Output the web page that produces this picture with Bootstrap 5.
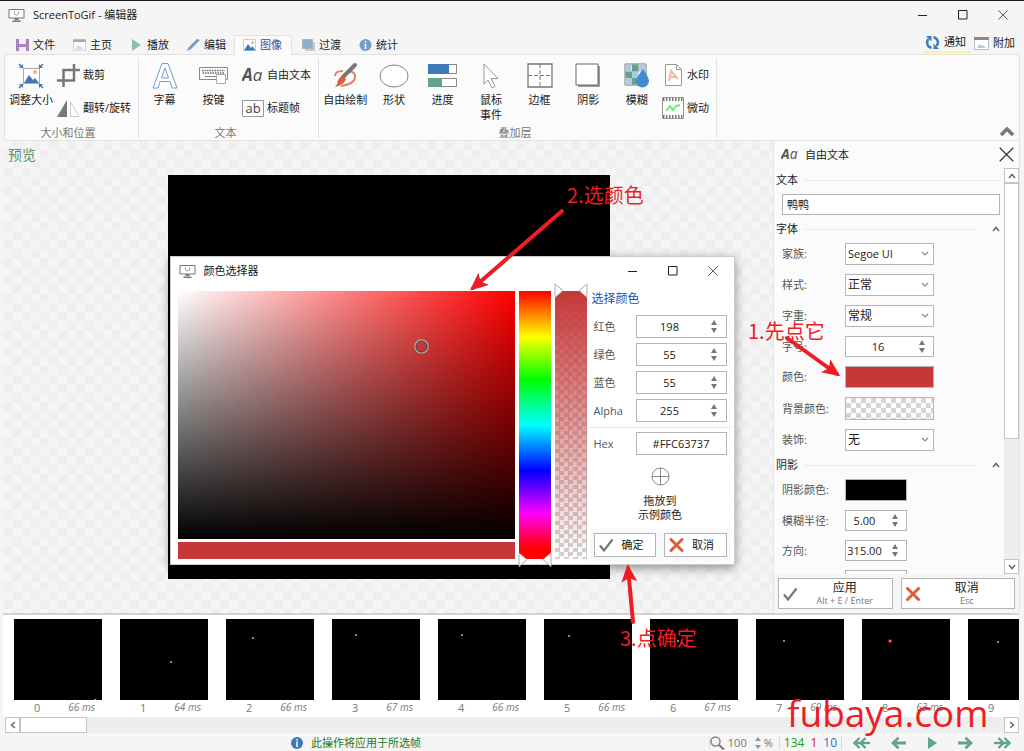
<!DOCTYPE html>
<html lang="zh-CN">
<head>
<meta charset="utf-8">
<meta name="viewport" content="width=device-width, initial-scale=1">
<title>ScreenToGif - 编辑器</title>
<link href="https://cdn.jsdelivr.net/npm/bootstrap@5.3.0/dist/css/bootstrap.min.css" rel="stylesheet">
<style>
  :root { --edge:#b4b4b4; --ink:#222; }
  body { height:100vh; overflow:hidden; background:#f5f5f5; color:var(--ink);
         font:11px/14px "Open Sans","Noto Sans CJK SC",sans-serif; border-top:1px solid #201a20; }
  svg { display:block; flex:none; }
  .btn { --bs-btn-font-size:11px; --bs-btn-line-height:14px; --bs-btn-padding-x:0; --bs-btn-padding-y:0;
         --bs-btn-border-radius:0; --bs-btn-border-width:0; --bs-btn-color:var(--ink); }
  .caption-row { height:32px; padding-bottom:4px; }
  .win-controls { gap:30px; }
  .win-controls .btn { width:10px; }

  /* ribbon */
  .tab-row { height:21px; padding:0 9px 0 6px; }
  .tab-row .nav-link { width:57px; height:19px; margin-top:2px; padding:0 0 0 9px; gap:4px; color:var(--ink); border:1px solid transparent; }
  .tab-row .nav-link.active { background:#fbfbfb; border-color:#e2e2e2 #e2e2e2 #fbfbfb; color:#2350ad; width:58px; height:20px; padding-left:8px; }
  .tab-row .extra { height:20px; gap:4px; }
  .tab-row .noted { border-bottom:2px solid #fbf3a0; padding:0 4px 0 2px; }
  .ribbon { height:87px; background:#fbfbfb; border:1px solid #e2e2e2; }
  .r-group { padding:4px 7px 0 1px; border-right:1px solid #e2e2e6; height:80px; margin-top:3px; }
  .r-group.first { padding-left:0; }
  .r-group.last { padding-left:2px; }
  .r-tools { height:65px; }
  .big-tool { width:49px; display:flex; flex-direction:column; align-items:center; gap:2px; line-height:15px; white-space:nowrap; }
  .first .big-tool { width:52px; }
  .big-tool svg { height:28px; }
  .side-tools { gap:9px; padding-top:1px; }
  .last .side-tools { margin-left:1px; }
  .side-tools .btn { display:flex; align-items:center; gap:3px; height:24px; white-space:nowrap; }
  .seven { display:grid; grid-template-columns:repeat(7,1fr); width:340px; }
  .seven .big-tool { width:auto; }
  .r-label { color:#777; text-align:center; line-height:12px; }

  /* canvas and image */
  .stage { background:repeating-conic-gradient(#efefef 0 25%,#f5f5f5 0 50%) 0 0/18px 18px; }
  .stage-title { left:4px; top:7px; font-size:14px; color:#5a9470; }
  .shot { width:442px; height:404px; background:#000; }

  /* colour dialog */
  .picker { left:2px; top:81px; width:565px; height:309px; background:#fff; border:1px solid #ccc; box-shadow:0 3px 10px rgba(0,0,0,.42); }
  .picker-head { height:28px; padding:0 16px 0 8px; }
  .picker-body { height:274px; padding:0 3px 0 7px; margin-top:6px; gap:4px; }
  .sv { height:248px; background:linear-gradient(to top,#000,transparent),linear-gradient(to right,#fff,#f00); }
  .sv svg { left:236px; top:48px; }
  .picked { height:17px; background:#c63737; margin-top:3px; }
  .slide { width:32px; height:268px; }
  .slide input { appearance:none; -webkit-appearance:none; width:100%; height:100%; margin:0; display:block; background:transparent; }
  .slide input::-webkit-slider-thumb { -webkit-appearance:none; width:0; height:0; }
  .hue { background:linear-gradient(#f00,#ff0 17%,#0f0 33%,#0ff 50%,#00f 67%,#f0f 83%,#f00 96%); }
  .alpha { background:linear-gradient(#c63737,rgba(198,55,55,0)),repeating-conic-gradient(#d2d2d2 0 25%,#fff 0 50%) 0 0/9px 9px; }
  .slide svg { left:-1px; overflow:visible; }
  .alpha svg { top:-8px; } .hue svg { bottom:-8px; }
  .values { width:141px; margin-left:-1px; }
  .values h2 { font-size:12px; line-height:16px; color:#2350ad; margin:0 0 8px 2px; }
  .v-row { display:flex; align-items:center; justify-content:space-between; padding:0 4px; margin-bottom:5px; color:#555; }

  /* fields */
  .box { display:flex; background:#fff; border:1px solid var(--edge); height:21px; }
  .box input { border:0; border-radius:0; padding:0; text-align:center; font-size:11px; line-height:14px; min-width:0; min-height:0; color:var(--ink); flex:1; background:transparent; }
  .box .spin { width:23px; display:flex; flex-direction:column; justify-content:space-evenly; align-items:center; }
  .box .spin .btn { line-height:0; }
  .v-row .box { width:91px; height:23px; }
  .w-wide { width:89px; } .w-slim { width:62px; }
  .form-select { height:22px; min-height:0; padding:0 16px 0 2px; border-radius:0; border-color:var(--edge); font-size:12px; line-height:18px; color:var(--ink);
    background:#fff url("data:image/svg+xml,%3Csvg xmlns='http://www.w3.org/2000/svg' viewBox='0 0 8 8'%3E%3Cpath d='M1 2l3 3 3-3' fill='none' stroke='%23888' stroke-width='1.2'/%3E%3C/svg%3E") no-repeat right 4px center/8px 8px; }
  .form-select.latin { font-size:11px; }
  .cmd { display:flex; align-items:center; background:#fff; --bs-btn-border-width:1px; --bs-btn-border-color:var(--edge); }

  /* side panel */
  .side { width:247px; background:#fbfbfb; border-left:1px solid #e4e4e4; border-right:1px solid #e4e4e4; }
  .side-head { height:27px; padding:0 5px 0 7px; gap:6px; }
  .legend-row { height:18px; margin:5px 4px 5px 2px; gap:6px; }
  .legend-row.top { margin-top:3px; }
  .legend-row hr { flex:1; margin:0; border-color:#bbb; }
  .p-row { display:flex; align-items:center; margin:0 0 9px 8px; color:#555; }
  .p-row label { width:63px; }
  .swatch { height:22px; --bs-btn-border-width:1px; --bs-btn-border-color:var(--edge); }
  .red-fill { background:#c63737; } .black-fill { background:#000; }
  .no-fill { height:23px; background:repeating-conic-gradient(#d6d6d6 0 25%,#fff 0 50%) 0 0/10px 10px; }
  .bar-y { width:15px; background:#eee; }
  .bar-y .btn, .bar-x .btn { background:#fff; border:1px solid #c4c4c4; width:15px; height:15px; display:flex; align-items:center; justify-content:center; }
  .bar-y .grip { height:256px; background:#fff; border:1px solid #c4c4c4; }
  .side-foot { height:39px; padding:4px; gap:8px; background:#f5f5f5; }
  .side-foot .cmd { flex:1; padding:0 0 0 4px; }
  .side-foot b { display:block; font-weight:400; font-size:12px; line-height:15px; }
  .side-foot small { display:block; font-size:9px; line-height:12px; color:#777; }

  /* frame strip */
  .strip { height:104px; background:#fff; border-top:2px solid #d2d2d2; padding:4px 0 0 11px; margin:0 5px 0 3px; }
  .frame { width:88px; margin-right:18px; flex:none; color:#777; }
  .frame svg { background:#000; width:88px; height:81px; }
  .frame div { padding:1px 7px 0 20px; line-height:13px; }
  .frame i { font-size:10px; }
  .bar-x { height:16px; background:#eee; margin:0 5px 2px; }
  .bar-x .btn { height:16px; }
  .bar-x .grip { width:67px; background:#fff; border:1px solid #c4c4c4; }
  .status { height:16px; padding:0 12px 0 3px; }
  .hint { color:#1a7a1a; }
  .counts { font-size:12px; gap:6px; padding:0 4px; border:solid #ddd; border-width:0 1px; }
  .zoom { gap:3px; width:70px; color:#777; border-left:1px solid #ddd; }
  .zoom input { width:24px; border:0; padding:0; background:transparent; color:#777; font-size:11px; line-height:14px; }
  .play { gap:16px; width:170px; padding-left:10px; }

  /* red notes over the window */
  .notes { inset:0; pointer-events:none; z-index:9; color:#ee1c24; }
  .notes p { position:absolute; margin:0; font:20px/24px "Noto Sans CJK SC",sans-serif; white-space:nowrap; }
  .n1 { left:748px; top:318px; } .n2 { left:567px; top:182px; } .n3 { left:620px; top:625px; }
  .notes .site { left:787px; top:687px; font:37px/50px "Open Sans",sans-serif; }
</style>
</head>
<body class="d-flex flex-column position-relative">

<svg width="0" height="0" class="position-absolute" aria-hidden="true">
  <defs>
    <symbol id="app" viewBox="0 0 16 13"><path d="M.5.5h15v8.500h-15z" fill="#fff" stroke="#777"/><path d="M6 2.500v2.500q2 2 4 0V2.500" fill="none" stroke="#999"/><path d="M6 9h4v2H6zM4 11.500h8V13H4z" fill="#777"/></symbol>
    <symbol id="aa" viewBox="0 0 22 16"><text x="0" y="14" font-family="Open Sans" font-style="italic" font-size="17" fill="#555"><tspan font-weight="700">A</tspan>a</text></symbol>
    <symbol id="pic" viewBox="0 0 13 12"><path d="M.5.5h12v11H.5z" fill="#fff" stroke="#ccc"/><path d="M1 11.500 5 5l3 4 1.500-2 3 4.500z" fill="#3c7ab8"/><circle cx="9.500" cy="3.500" r="1.500" fill="#f0b95b"/></symbol>
    <symbol id="win" viewBox="0 0 15 13"><path d="M.5.5h14v12H.5z" fill="#fff" stroke="#bbb"/><path d="M0 0h15v3H0z" fill="#888"/><path d="M3 11l3-4 2 2 1-1 3 3z" fill="#a8cbea"/></symbol>
    <symbol id="info" viewBox="0 0 12 12"><circle cx="6" cy="6" r="6" fill="#3c7ab8"/><path d="M6 2v1.500M6 4.500V10" stroke="#fff" stroke-width="1.500"/></symbol>
    <symbol id="up" viewBox="0 0 6 5"><path d="M3 0l3 5H0z" fill="#777"/></symbol>
    <symbol id="down" viewBox="0 0 6 5"><path d="M3 5l3-5H0z" fill="#777"/></symbol>
    <symbol id="tick" viewBox="0 0 15 14"><path d="M1 7.500l4 5L13.500 1.500" fill="none" stroke="#777" stroke-width="2.200"/></symbol>
    <symbol id="cross" viewBox="0 0 14 14"><path d="M1.500 1.500l11 11M12.500 1.500l-11 11" stroke="#dc5c3c" stroke-width="3" stroke-linecap="round"/></symbol>
    <symbol id="min" viewBox="0 0 10 10"><path d="M0 5.500h9" stroke="#222"/></symbol>
    <symbol id="max" viewBox="0 0 10 10"><path d="M.5.5h8.500V9H.5z" fill="none" stroke="#222"/></symbol>
    <symbol id="x" viewBox="0 0 10 10"><path d="M.5.5l9 9M9.500.5l-9 9" stroke="#333" stroke-width=".8"/></symbol>
    <symbol id="chev" viewBox="0 0 8 6"><path d="M1 5l3-3.500L7 5" fill="none" stroke="#666" stroke-width="1.500"/></symbol>
    <symbol id="arrow" viewBox="0 0 15 12"><path d="M0 6h12" stroke="#63a28f" stroke-width="3"/><path d="M7.500.8l5.500 5.200-5.500 5.200" fill="none" stroke="#63a28f" stroke-width="2.800"/></symbol>
    <symbol id="arrow2" viewBox="0 0 18 12"><path d="M0 6h14" stroke="#63a28f" stroke-width="2.400"/><path d="M4.500 1l5 5-5 5M10.500 1l5 5-5 5" fill="none" stroke="#63a28f" stroke-width="2.400"/></symbol>
    <symbol id="pointers" viewBox="0 0 34 15"><path d="M1 1v13.500l8-7zM33 1v13.500l-8-7z" fill="#fff" stroke="#aaa"/></symbol>
  </defs>
</svg>

<header class="caption-row d-flex flex-shrink-0 align-items-center justify-content-between ps-2 pe-3">
  <div class="d-flex align-items-center gap-2"><svg width="17" height="13"><use href="#app"/></svg><span>ScreenToGif - 编辑器</span></div>
  <div class="win-controls d-flex">
    <button class="btn" aria-label="最小化"><svg width="10" height="10"><use href="#min"/></svg></button>
    <button class="btn" aria-label="最大化"><svg width="10" height="10"><use href="#max"/></svg></button>
    <button class="btn" aria-label="关闭"><svg width="10" height="10"><use href="#x"/></svg></button>
  </div>
</header>

<div class="tab-row d-flex flex-shrink-0 justify-content-between position-relative z-1">
  <nav class="nav flex-nowrap">
    <a href="#" class="nav-link d-flex align-items-center"><svg width="13" height="12"><path d="M0 0h13v12H0z" fill="#a583bd"/><path d="M3 0h7v5H3zM3 8h7v4H3z" fill="#f3edf7"/></svg>文件</a>
    <a href="#" class="nav-link d-flex align-items-center"><svg width="13" height="12" opacity=".7"><use href="#win"/></svg>主页</a>
    <a href="#" class="nav-link d-flex align-items-center"><svg width="13" height="12"><path d="M2 0l9 6-9 6z" fill="#8fbdb0"/></svg>播放</a>
    <a href="#" class="nav-link d-flex align-items-center"><svg width="13" height="12"><path d="M0 12l1-3L10 0l3 1-9 9z" fill="#6c9ccc"/></svg>编辑</a>
    <a href="#" class="nav-link active d-flex align-items-center" aria-current="page"><svg width="13" height="12"><use href="#pic"/></svg>图像</a>
    <a href="#" class="nav-link d-flex align-items-center"><svg width="13" height="12"><path d="M3 3h10v9H3z" fill="#c6cdd2"/><path d="M.5.5h10v9H.5z" fill="#8db0cf" stroke="#b3b3b3"/></svg>过渡</a>
    <a href="#" class="nav-link d-flex align-items-center"><svg width="13" height="12" opacity=".7"><use href="#info"/></svg>统计</a>
  </nav>
  <div class="d-flex">
    <button class="btn extra noted d-flex align-items-center"><svg width="15" height="15" viewBox="0 0 15 15"><path d="M6.500 12.800A5.300 5.300 0 0 1 3.500 4M8.500 2.200A5.300 5.300 0 0 1 11.500 11" fill="none" stroke="#3c7ab8" stroke-width="2.400"/><path d="M1 1h5.500v5.500zM14 14H8.500V8.500z" fill="#3c7ab8"/></svg>通知</button>
    <button class="btn extra d-flex align-items-center ps-1"><svg width="15" height="13"><use href="#win"/></svg>附加</button>
  </div>
</div>

<section class="ribbon d-flex flex-shrink-0 ms-1 me-1">
  <div class="r-group first">
    <div class="r-tools d-flex">
      <button class="btn big-tool"><svg width="28" height="28" viewBox="0 0 28 28"><path d="M6.500 6.500h16v15h-16z" fill="#fff" stroke="#aaa"/><path d="M7 21l5-8 4 5 2-2 4 5z" fill="#3c7ab8"/><circle cx="18" cy="10" r="2" fill="#f0b95b"/><path d="M2 2l4 4M26 2l-4 4M2 26l4-4M26 26l-4-4" stroke="#3c7ab8" stroke-width="1.500"/><path d="M6 2v4H2zM22 2v4h4zM6 26v-4H2zM22 26v-4h4z" fill="#3c7ab8"/></svg>调整大小</button>
      <div class="side-tools d-flex flex-column">
        <button class="btn"><svg width="23" height="23"><path d="M6.500 0v17H23M0 6.500h17V23" fill="none" stroke="#777" stroke-width="2.500" transform="matrix(1 0 0 -1 0 23)"/></svg>裁剪</button>
        <button class="btn"><svg width="23" height="17"><path d="M10 0v17H0z" fill="#777"/><path d="M13.500 2v14.500H22z" fill="#fff" stroke="#ccc"/></svg>翻转/旋转</button>
      </div>
    </div>
    <div class="r-label">大小和位置</div>
  </div>
  <div class="r-group">
    <div class="r-tools d-flex">
      <button class="btn big-tool"><svg width="26" height="28" viewBox="0 0 26 28"><path d="M10 1.500h6L25 26h-5l-2-6.500H8L6 26H1zM13 6L9.500 16h7z" fill="#fff" stroke="#6fa0d0"/></svg>字幕</button>
      <button class="btn big-tool"><svg width="29" height="28" viewBox="0 0 29 28"><path d="M.5 5.500h28v12H.5z" fill="#fff" stroke="#888"/><path d="M3 8.500h23M3.500 11h22" stroke="#666" stroke-width="1.500" stroke-dasharray="1.500 1"/><path d="M6 14.500h11" stroke="#888"/><path d="M17.500 12.500h9v9h-9z" fill="#fff" stroke="#aaa"/></svg>按键</button>
      <div class="side-tools d-flex flex-column ms-1">
        <button class="btn"><svg width="22" height="16"><use href="#aa"/></svg>自由文本</button>
        <button class="btn"><svg width="22" height="17"><path d="M.5.5h21v16H.5z" fill="#fff" stroke="#999"/><text x="3.500" y="13" font-size="13" font-family="Open Sans" fill="#444">ab</text></svg>标题帧</button>
      </div>
    </div>
    <div class="r-label">文本</div>
  </div>
  <div class="r-group last">
    <div class="r-tools d-flex">
      <div class="seven">
        <button class="btn big-tool"><svg width="28" height="28" viewBox="0 0 28 28"><path d="M4 14Q4 9 12 9M18 9q7 1 6 7t-14 8" fill="none" stroke="#e58069" stroke-width="2"/><path d="M24 3L13 14" stroke="#777" stroke-width="4" stroke-linecap="round"/><path d="M11 13l4 4q-2 6-11 8 3-3 3-7z" fill="#dc5c3c"/></svg>自由绘制</button>
        <button class="btn big-tool"><svg width="30" height="28" viewBox="0 0 30 28"><ellipse cx="15" cy="14" rx="14" ry="11" fill="#fff" stroke="#888"/></svg>形状</button>
        <button class="btn big-tool"><svg width="29" height="28" viewBox="0 0 29 28"><path d="M.5 2.500h28v9H.5zM.5 16.500h28v8H.5z" fill="#fff" stroke="#888"/><path d="M0 2h21v10H0z" fill="#3c7ab8"/><path d="M0 16h14v9H0z" fill="#63a28f"/></svg>进度</button>
        <button class="btn big-tool"><svg width="18" height="28" viewBox="0 0 18 28"><path d="M2 2v20l4-4 4 8 3-1.500-4-8h7z" fill="#fff" stroke="#999"/></svg>鼠标<br>事件</button>
        <button class="btn big-tool"><svg width="26" height="28" viewBox="0 0 26 28"><path d="M1 2h24v23H1z" fill="#fff" stroke="#777" stroke-width="1.300"/><path d="M13 2v23M1 13.500h24" stroke="#777" stroke-dasharray="4 2"/></svg>边框</button>
        <button class="btn big-tool"><svg width="26" height="28" viewBox="0 0 26 28"><path d="M3 4h22v21H3z" fill="#999"/><path d="M1 2h22v21H1z" fill="#fff" stroke="#666"/></svg>阴影</button>
        <button class="btn big-tool"><svg width="26" height="28" viewBox="0 0 26 28"><path d="M1 2h21v21H1z" fill="#fff" stroke="#777"/><path d="M1.500 2.500h6v7h-6zM14.500 2.500h7v7h-7zM8 9.500h6.500V16H8zM1.500 16H8v6.500H1.500z" fill="#b5c8e3"/><path d="M8 2.500h6.500v7H8zM1.500 9.500H8V16H1.500zM8 16h6.500v6.500H8z" fill="#63a28f"/><path d="M19 7q-7 9-7 12a6.500 6.500 0 0 0 13 0q0-3-6-12z" fill="#438bd0"/></svg>模糊</button>
      </div>
      <div class="side-tools d-flex flex-column">
        <button class="btn"><svg width="22" height="22"><path d="M3.500.5h11l5 5v16h-16zM14.500.5v5h5" fill="#fff" stroke="#999"/><path d="M7 17L9 7l7 8M8 13h6" fill="none" stroke="#f2b6a8" stroke-width="2"/></svg>水印</button>
        <button class="btn"><svg width="22" height="22"><path d="M.5.500h21v21H.5z" fill="#fff" stroke="#999"/><path d="M1 2.500h20M1 19.500h20" stroke="#777" stroke-width="3" stroke-dasharray="1.500 1.500"/><path d="M4 14l4-5 3 4 3-4 4-1" fill="none" stroke="#6cf06c" stroke-width="2"/></svg>微动</button>
      </div>
    </div>
    <div class="r-label">叠加层</div>
  </div>
  <button class="btn ms-auto align-self-end me-1 pb-1" aria-label="折叠"><svg width="16" height="10"><path d="M2 9l6-6 6 6" fill="none" stroke="#777" stroke-width="3.500"/></svg></button>
</section>

<main class="d-flex flex-fill ms-1 me-1" style="min-height:0">
  <section class="stage position-relative flex-fill d-flex align-items-center justify-content-center">
    <div class="stage-title position-absolute">预览</div>
    <div class="shot position-relative">
      <div class="picker position-absolute" role="dialog" aria-label="颜色选择器">
        <div class="picker-head d-flex align-items-center justify-content-between">
          <div class="d-flex align-items-center gap-2"><svg width="17" height="13"><use href="#app"/></svg>颜色选择器</div>
          <div class="win-controls d-flex">
            <button class="btn" aria-label="最小化"><svg width="10" height="10"><use href="#min"/></svg></button>
            <button class="btn" aria-label="最大化"><svg width="10" height="10"><use href="#max"/></svg></button>
            <button class="btn" aria-label="关闭"><svg width="10" height="10"><use href="#x"/></svg></button>
          </div>
        </div>
        <div class="picker-body d-flex">
          <div class="flex-fill">
            <div class="sv position-relative"><svg class="position-absolute" width="15" height="15"><circle cx="7.500" cy="7.500" r="6.500" fill="none" stroke="#aaa" stroke-width="1.500"/><circle cx="7.500" cy="7.500" r="5.500" fill="none" stroke="#444"/></svg></div>
            <div class="picked"></div>
          </div>
          <div class="slide hue position-relative"><input type="range" aria-label="色相" value="0"><svg class="position-absolute" width="34" height="15"><use href="#pointers"/></svg></div>
          <div class="slide alpha position-relative"><input type="range" aria-label="透明度" value="100"><svg class="position-absolute" width="34" height="15"><use href="#pointers"/></svg></div>
          <div class="values d-flex flex-column">
            <h2 class="fw-normal">选择颜色</h2>
            <div class="v-row"><label for="cr">红色</label><div class="box"><input class="form-control" id="cr" value="198"><span class="spin"><button class="btn" aria-label="增加"><svg width="6" height="5"><use href="#up"/></svg></button><button class="btn" aria-label="减少"><svg width="6" height="5"><use href="#down"/></svg></button></span></div></div>
            <div class="v-row"><label for="cg">绿色</label><div class="box"><input class="form-control" id="cg" value="55"><span class="spin"><button class="btn" aria-label="增加"><svg width="6" height="5"><use href="#up"/></svg></button><button class="btn" aria-label="减少"><svg width="6" height="5"><use href="#down"/></svg></button></span></div></div>
            <div class="v-row"><label for="cb">蓝色</label><div class="box"><input class="form-control" id="cb" value="55"><span class="spin"><button class="btn" aria-label="增加"><svg width="6" height="5"><use href="#up"/></svg></button><button class="btn" aria-label="减少"><svg width="6" height="5"><use href="#down"/></svg></button></span></div></div>
            <div class="v-row"><label for="ca">Alpha</label><div class="box"><input class="form-control" id="ca" value="255"><span class="spin"><button class="btn" aria-label="增加"><svg width="6" height="5"><use href="#up"/></svg></button><button class="btn" aria-label="减少"><svg width="6" height="5"><use href="#down"/></svg></button></span></div></div>
            <div class="border-top mb-1"></div>
            <div class="v-row"><label for="ch">Hex</label><div class="box"><input class="form-control" id="ch" value="#FFC63737"></div></div>
            <div class="d-flex flex-column align-items-center text-center my-auto gap-2 lh-sm">
              <svg width="19" height="19"><circle cx="9.500" cy="9.500" r="8.500" fill="#fff" stroke="#888"/><path d="M9.500 1v17M1 9.500h17" stroke="#888"/></svg>
              <span>拖放到<br>示例颜色</span>
            </div>
            <div class="d-flex gap-2 p-1 mb-1 bg-light">
              <button class="btn cmd flex-fill px-1 py-1 gap-2"><svg width="15" height="14"><use href="#tick"/></svg>确定</button>
              <button class="btn cmd flex-fill px-1 py-1 gap-2"><svg width="15" height="14"><use href="#cross"/></svg>取消</button>
            </div>
          </div>
        </div>
      </div>
    </div>
  </section>

  <aside class="side d-flex flex-column flex-shrink-0">
    <div class="side-head d-flex flex-shrink-0 align-items-center"><svg width="18" height="13"><use href="#aa"/></svg><span>自由文本</span><button class="btn ms-auto" aria-label="关闭"><svg width="15" height="15"><use href="#x"/></svg></button></div>
    <div class="d-flex flex-fill overflow-hidden" style="min-height:0">
      <div class="flex-fill">
        <div class="legend-row top d-flex align-items-center"><span>文本</span><hr></div>
        <div class="box ms-2 me-1"><input class="form-control text-start ps-1" aria-label="文本" value="鸭鸭"></div>
        <div class="legend-row d-flex align-items-center"><span>字体</span><hr><svg class="ms-2" width="8" height="6"><use href="#chev"/></svg></div>
        <div class="p-row"><label for="f1">家族:</label><select class="form-select latin w-wide" id="f1"><option>Segoe UI</option></select></div>
        <div class="p-row"><label for="f2">样式:</label><select class="form-select w-wide" id="f2"><option>正常</option></select></div>
        <div class="p-row"><label for="f3">字重:</label><select class="form-select w-wide" id="f3"><option>常规</option></select></div>
        <div class="p-row"><label for="f4">字号:</label><div class="box w-wide"><input class="form-control" id="f4" value="16"><span class="spin"><button class="btn" aria-label="增加"><svg width="6" height="5"><use href="#up"/></svg></button><button class="btn" aria-label="减少"><svg width="6" height="5"><use href="#down"/></svg></button></span></div></div>
        <div class="p-row"><label for="f5">颜色:</label><button class="btn swatch red-fill w-wide" id="f5" aria-label="颜色"></button></div>
        <div class="p-row"><label for="f6">背景颜色:</label><button class="btn swatch no-fill w-wide" id="f6" aria-label="背景颜色"></button></div>
        <div class="p-row mb-0"><label for="f7">装饰:</label><select class="form-select w-wide" id="f7"><option>无</option></select></div>
        <div class="legend-row d-flex align-items-center"><span>阴影</span><hr><svg class="ms-2" width="8" height="6"><use href="#chev"/></svg></div>
        <div class="p-row"><label for="s1">阴影颜色:</label><button class="btn swatch black-fill w-slim" id="s1" aria-label="阴影颜色"></button></div>
        <div class="p-row"><label for="s2">模糊半径:</label><div class="box w-slim"><input class="form-control" id="s2" value="5.00"><span class="spin"><button class="btn" aria-label="增加"><svg width="6" height="5"><use href="#up"/></svg></button><button class="btn" aria-label="减少"><svg width="6" height="5"><use href="#down"/></svg></button></span></div></div>
        <div class="p-row"><label for="s3">方向:</label><div class="box w-slim"><input class="form-control" id="s3" value="315.00"><span class="spin"><button class="btn" aria-label="增加"><svg width="6" height="5"><use href="#up"/></svg></button><button class="btn" aria-label="减少"><svg width="6" height="5"><use href="#down"/></svg></button></span></div></div>
        <div class="p-row"><label for="s4">不透明度:</label><div class="box w-slim"><input class="form-control" id="s4" value="100"><span class="spin"><button class="btn" aria-label="增加"><svg width="6" height="5"><use href="#up"/></svg></button><button class="btn" aria-label="减少"><svg width="6" height="5"><use href="#down"/></svg></button></span></div></div>
      </div>
      <div class="bar-y d-flex flex-column">
        <button class="btn" aria-label="向上"><svg width="8" height="6"><use href="#chev"/></svg></button>
        <div class="grip"></div>
        <button class="btn mt-auto" aria-label="向下"><svg width="8" height="6" viewBox="0 0 8 6"><path d="M1 1l3 3.500L7 1" fill="none" stroke="#666" stroke-width="1.500"/></svg></button>
      </div>
    </div>
    <div class="side-foot d-flex flex-shrink-0">
      <button class="btn cmd"><svg width="15" height="14"><use href="#tick"/></svg><span class="flex-fill"><b>应用</b><small>Alt + E / Enter</small></span></button>
      <button class="btn cmd"><svg width="14" height="14"><use href="#cross"/></svg><span class="flex-fill"><b>取消</b><small>Esc</small></span></button>
    </div>
  </aside>
</main>

<section class="strip d-flex overflow-hidden flex-shrink-0" id="strip"></section>
<div class="bar-x d-flex flex-shrink-0">
  <button class="btn" aria-label="向左"><svg width="6" height="8"><path d="M5 1L1.500 4 5 7" fill="none" stroke="#666" stroke-width="1.500"/></svg></button>
  <div class="grip"></div>
  <button class="btn ms-auto" aria-label="向右"><svg width="6" height="8"><path d="M1 1l3.500 3L1 7" fill="none" stroke="#666" stroke-width="1.500"/></svg></button>
</div>

<footer class="status d-flex align-items-center flex-shrink-0">
  <div class="hint flex-fill d-flex justify-content-center align-items-center gap-2"><svg width="12" height="12"><use href="#info"/></svg>此操作将应用于所选帧</div>
  <div class="zoom d-flex align-items-center"><svg width="15" height="14"><circle cx="5.500" cy="5.500" r="4.500" fill="none" stroke="#888" stroke-width="1.500"/><path d="M9 9l5 4.500" stroke="#777" stroke-width="2"/></svg><input aria-label="缩放" value="100"><svg width="6" height="12"><path d="M3 0l3 4H0zM3 12l3-4H0z" fill="#999"/></svg>%</div>
  <div class="counts d-flex"><span style="color:#1ba01b">134</span><span style="color:#d01c1c">1</span><span style="color:#2277cc">10</span></div>
  <div class="play d-flex align-items-center justify-content-between">
    <button class="btn" aria-label="第一帧"><svg width="18" height="12" viewBox="0 0 18 12"><use href="#arrow2" width="18" height="12" transform="matrix(-1 0 0 1 18 0)"/></svg></button>
    <button class="btn" aria-label="上一帧"><svg width="15" height="12" viewBox="0 0 15 12"><use href="#arrow" width="15" height="12" transform="matrix(-1 0 0 1 15 0)"/></svg></button>
    <button class="btn" aria-label="播放"><svg width="9" height="12"><path d="M0 0l9 6-9 6z" fill="#63a28f"/></svg></button>
    <button class="btn" aria-label="下一帧"><svg width="15" height="12"><use href="#arrow"/></svg></button>
    <button class="btn" aria-label="最后一帧"><svg width="18" height="12"><use href="#arrow2"/></svg></button>
  </div>
</footer>

<div class="notes position-absolute">
  <svg class="position-absolute" width="100%" height="100%">
    <defs><marker id="head" markerUnits="userSpaceOnUse" markerWidth="20" markerHeight="20" refX="14" refY="8" orient="auto"><path d="M18 8L0 0l4 8-4 8z" fill="#ee1c24"/></marker></defs>
    <g stroke="#ee1c24" stroke-width="4" stroke-linecap="round">
      <path d="M562 210L473 287" marker-end="url(#head)"/><path d="M787 337L837 373" marker-end="url(#head)"/><path d="M633 621L628 567" marker-end="url(#head)"/>
    </g>
  </svg>
  <p class="n1">1.先点它</p><p class="n2">2.选颜色</p><p class="n3">3.点确定</p><p class="site">fubaya.com</p>
</div>

<script>
  const frames = [[66,81,81],[64,51,43],[66,27,19],[67,24,16],[66,24,16],[66,25,17],[67,28,22],[69,28,22],[63,28,22],[null,30,23]];
  document.getElementById('strip').innerHTML = frames.map(([ms, x, y], i) =>
    `<div class="frame"><svg>${i === 8 ? `<circle cx="${x}" cy="${y}" r="2" fill="#b00"/>` : ''}<circle cx="${x}" cy="${y}" r="1" fill="#bbb"/></svg>
     <div class="d-flex justify-content-between"><span>${i}</span>${ms ? `<i>${ms} ms</i>` : ''}</div></div>`).join('');
</script>
<script src="https://cdn.jsdelivr.net/npm/bootstrap@5.3.0/dist/js/bootstrap.bundle.min.js"></script>
</body>
</html>
